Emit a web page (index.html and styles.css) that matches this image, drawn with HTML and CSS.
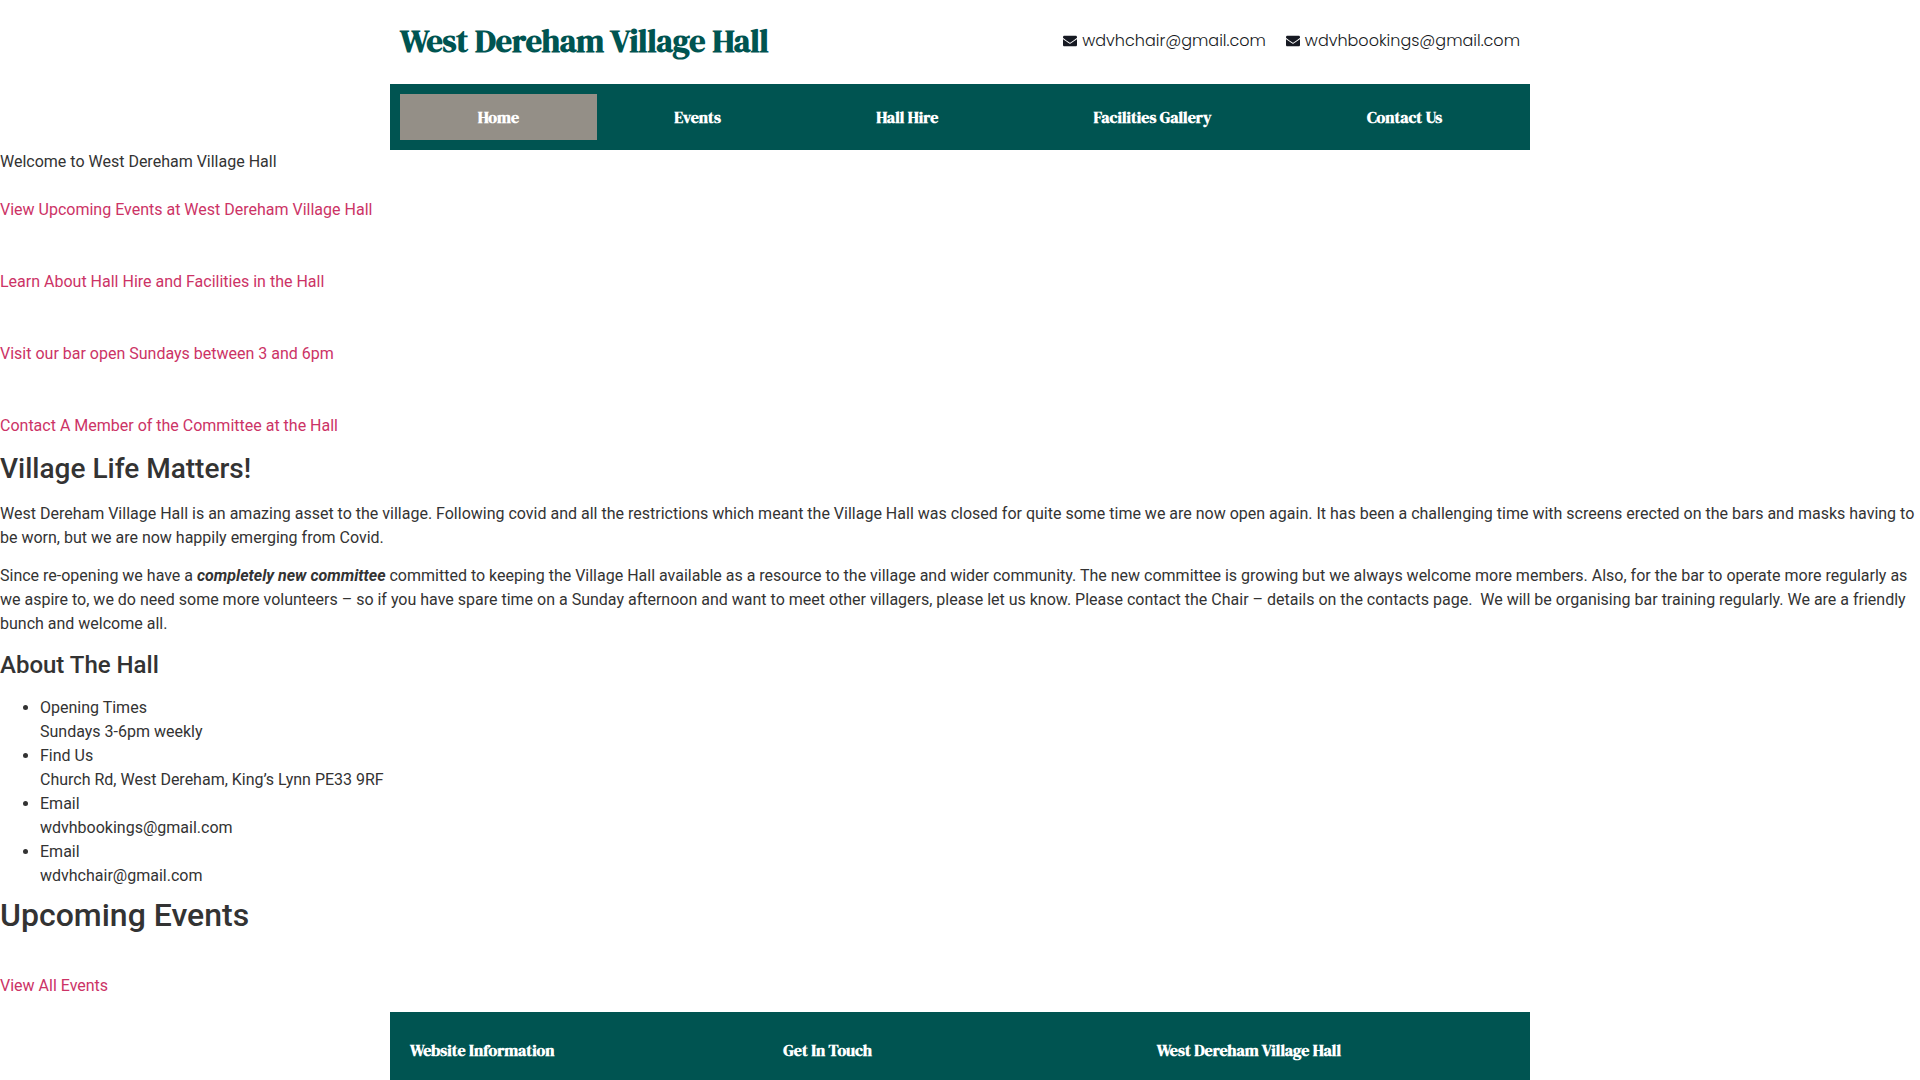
FILE: index.html
```html
<!DOCTYPE html>
<html lang="en-GB">
<head>
    <meta charset="UTF-8">
    <meta name="viewport" content="width=device-width, initial-scale=1.0">
    <title>West Dereham Village Hall</title>
    <link rel="stylesheet" href="styles.css">
</head>
<body>
    <header class="container">
        <div class="header-top">
            <h1 class="site-title">West Dereham Village Hall</h1>
            <div class="header-emails">
                <a href="mailto:wdvhchair@gmail.com">
                    <svg class="icon" viewBox="0 0 512 512" aria-hidden="true"><path d="M502.3 190.8c3.9-3.1 9.7-.2 9.7 4.7V400c0 26.5-21.5 48-48 48H48c-26.5 0-48-21.5-48-48V195.6c0-5 5.7-7.8 9.7-4.7 22.4 17.4 52.1 39.5 154.1 113.6 21.1 15.4 56.7 47.8 92.2 47.6 35.7.3 72-32.8 92.3-47.6 102-74.1 131.6-96.3 154-113.7zM256 320c23.2.4 56.6-29.2 73.4-41.4 132.7-96.3 142.8-104.7 173.4-128.7 5.8-4.5 9.2-11.5 9.2-18.9v-19c0-26.5-21.5-48-48-48H48c-26.5 0-48 21.5-48 48v19c0 7.4 3.4 14.3 9.2 18.9 30.6 23.9 40.7 32.4 173.4 128.7 16.8 12.2 50.2 41.8 73.4 41.4z"/></svg>
                    <span>wdvhchair@gmail.com</span>
                </a>
                <a href="mailto:wdvhbookings@gmail.com">
                    <svg class="icon" viewBox="0 0 512 512" aria-hidden="true"><path d="M502.3 190.8c3.9-3.1 9.7-.2 9.7 4.7V400c0 26.5-21.5 48-48 48H48c-26.5 0-48-21.5-48-48V195.6c0-5 5.7-7.8 9.7-4.7 22.4 17.4 52.1 39.5 154.1 113.6 21.1 15.4 56.7 47.8 92.2 47.6 35.7.3 72-32.8 92.3-47.6 102-74.1 131.6-96.3 154-113.7zM256 320c23.2.4 56.6-29.2 73.4-41.4 132.7-96.3 142.8-104.7 173.4-128.7 5.8-4.5 9.2-11.5 9.2-18.9v-19c0-26.5-21.5-48-48-48H48c-26.5 0-48 21.5-48 48v19c0 7.4 3.4 14.3 9.2 18.9 30.6 23.9 40.7 32.4 173.4 128.7 16.8 12.2 50.2 41.8 73.4 41.4z"/></svg>
                    <span>wdvhbookings@gmail.com</span>
                </a>
            </div>
        </div>
        <nav class="main-nav">
            <a href="index.html" class="active">Home</a>
            <a href="events.html">Events</a>
            <a href="hall-hire.html">Hall Hire</a>
            <a href="gallery.html">Facilities Gallery</a>
            <a href="contact.html">Contact Us</a>
        </nav>
    </header>

    <main>
        <div>Welcome to West Dereham Village Hall</div>

        <div class="quick-links">
            <a href="events.html">View Upcoming Events at West Dereham Village Hall</a>
            <a href="hall-hire.html">Learn About Hall Hire and Facilities in the Hall</a>
            <a href="bar.html">Visit our bar open Sundays between 3 and 6pm</a>
            <a href="contact.html">Contact A Member of the Committee at the Hall</a>
        </div>

        <h3>Village Life Matters!</h3>
        <p>West Dereham Village Hall is an amazing asset to the village. Following covid and all the restrictions which meant the Village Hall was closed for quite some time we are now open again. It has been a challenging time with screens erected on the bars and masks having to be worn, but we are now happily emerging from Covid.</p>
        <p>Since re-opening we have a <strong><em>completely new committee</em></strong> committed to keeping the Village Hall available as a resource to the village and wider community. The new committee is growing but we always welcome more members. Also, for the bar to operate more regularly as we aspire to, we do need some more volunteers – so if you have spare time on a Sunday afternoon and want to meet other villagers, please let us know. Please contact the Chair – details on the contacts page.&nbsp; We will be organising bar training regularly. We are a friendly bunch and welcome all.</p>

        <h4>About The Hall</h4>
        <ul class="hall-info">
            <li>Opening Times<br>Sundays 3-6pm weekly</li>
            <li>Find Us<br>Church Rd, West Dereham, King’s Lynn PE33 9RF</li>
            <li>Email<br>wdvhbookings@gmail.com</li>
            <li>Email<br>wdvhchair@gmail.com</li>
        </ul>

        <h2>Upcoming Events</h2>
        <p class="all-events"><a href="events.html">View All Events</a></p>
    </main>

    <footer class="container footer">
        <h5>Website Information</h5>
        <h5>Get In Touch</h5>
        <h5>West Dereham Village Hall</h5>
    </footer>
</body>
</html>
```
FILE: styles.css
```css
* {
    box-sizing: border-box;
}

body {
    display: flex;
    flex-direction: column;
    min-height: 100vh;
    margin: 0;
    background: #fff;
    color: #333;
    font-family: Roboto, sans-serif;
    font-size: 16px;
    line-height: 24px;
}

a {
    color: #c36;
    text-decoration: none;
}

h2, h3, h4 {
    margin: 0 0 16px;
    font-weight: 500;
}

h2 {
    margin-top: 8px;
    font-size: 32px;
    line-height: 38px;
}

h3 {
    font-size: 28px;
    line-height: 34px;
}

h4 {
    font-size: 24px;
    line-height: 30px;
}

p {
    margin: 0 0 14px;
}

.container {
    width: 100%;
    max-width: 1140px;
    margin: 0 auto;
}

/* Header */
.header-top {
    display: flex;
    align-items: center;
    justify-content: space-between;
    padding: 21px 10px 23px;
}

.site-title {
    margin: 0;
    color: #005451;
    font-family: "DM Serif Display", "Liberation Serif", serif;
    font-size: 32px;
    font-weight: 700;
    line-height: 40px;
}

.header-emails {
    display: flex;
    gap: 20px;
    font-family: Poppins, Inter, sans-serif;
    font-size: 16px;
    font-weight: 300;
}

.header-emails a {
    display: flex;
    align-items: center;
    gap: 5px;
    color: #161922;
}

.icon {
    width: 14px;
    height: 14px;
    fill: currentColor;
}

.main-nav {
    display: flex;
    padding: 10px;
    background: #005451;
}

.main-nav a {
    flex: 1 1 auto;
    padding: 11px 20px;
    color: #fff;
    font-family: "DM Serif Display", "Liberation Serif", serif;
    font-weight: 700;
    text-align: center;
}

.main-nav a.active {
    background: #948f87;
}

/* Content */
.quick-links {
    display: flex;
    flex-direction: column;
    align-items: flex-start;
    gap: 48px;
    margin: 24px 0 14px;
}

.hall-info {
    margin: 0;
    padding-left: 40px;
}

.all-events {
    padding-top: 24px;
}

/* Footer */
.footer {
    display: grid;
    flex: 1;
    grid-template-columns: repeat(3, 1fr);
    padding: 16px 10px;
    background: #005451;
}

.footer h5 {
    margin: 0;
    padding: 10px;
    color: #fff;
    font-family: "DM Serif Display", "Liberation Serif", serif;
    font-size: 16px;
    font-weight: 700;
}
```
